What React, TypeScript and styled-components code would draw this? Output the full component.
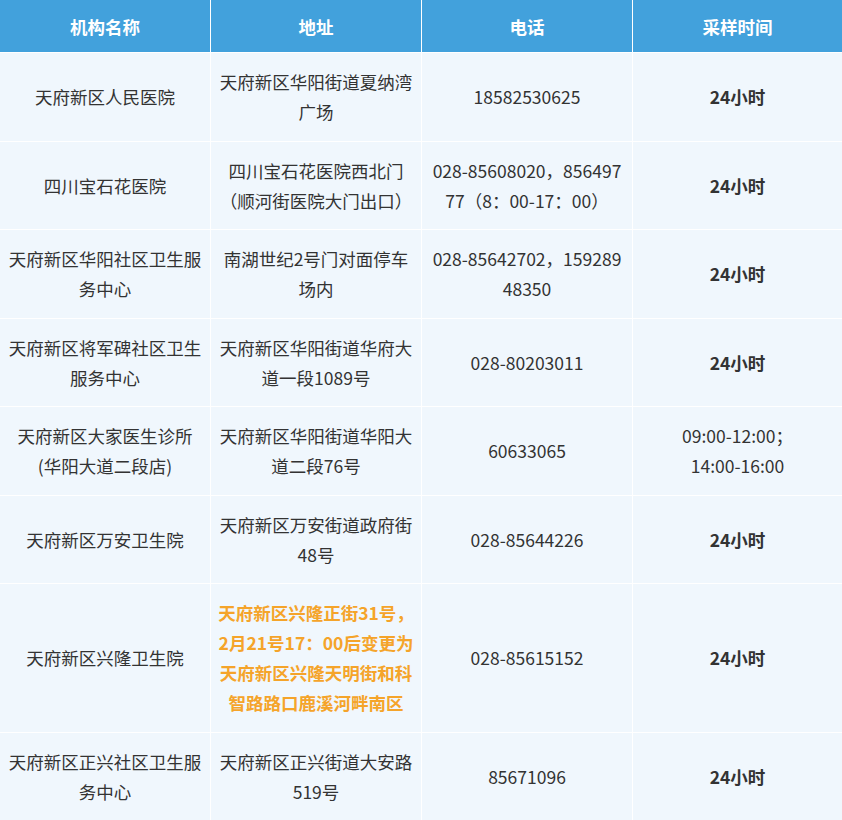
import React from "react";
import styled, { createGlobalStyle } from "styled-components";

const GlobalStyle = createGlobalStyle`
  body {
    margin: 0;
    background: #ffffff;
    font-family: "Noto Sans CJK SC", "Noto Sans", sans-serif;
  }
`;

type SiteType = {
  name: string;
  address: string | string[];
  phone: string;
  time: string | string[];
  highlight?: boolean;
  boldTime?: boolean;
};

const sites: SiteType[] = [
  { name: "天府新区人民医院", address: "天府新区华阳街道夏纳湾广场", phone: "18582530625", time: "24小时", boldTime: true },
  { name: "四川宝石花医院", address: "四川宝石花医院西北门（顺河街医院大门出口）", phone: "028-85608020，85649777（8：00-17：00）", time: "24小时", boldTime: true },
  { name: "天府新区华阳社区卫生服务中心", address: "南湖世纪2号门对面停车场内", phone: "028-85642702，15928948350", time: "24小时", boldTime: true },
  { name: "天府新区将军碑社区卫生服务中心", address: "天府新区华阳街道华府大道一段1089号", phone: "028-80203011", time: "24小时", boldTime: true },
  { name: "天府新区大家医生诊所(华阳大道二段店)", address: "天府新区华阳街道华阳大道二段76号", phone: "60633065", time: ["09:00-12:00；", "14:00-16:00"] },
  { name: "天府新区万安卫生院", address: "天府新区万安街道政府街48号", phone: "028-85644226", time: "24小时", boldTime: true },
  {
    name: "天府新区兴隆卫生院",
    address: ["天府新区兴隆正街31号，", "2月21号17：00后变更为", "天府新区兴隆天明街和科", "智路路口鹿溪河畔南区"],
    phone: "028-85615152",
    time: "24小时",
    highlight: true,
    boldTime: true,
  },
  { name: "天府新区正兴社区卫生服务中心", address: "天府新区正兴街道大安路519号", phone: "85671096", time: "24小时", boldTime: true },
];

const headers = ["机构名称", "地址", "电话", "采样时间"];

const renderLines = (value: string | string[]) =>
  Array.isArray(value) ? value.map((line) => <Line key={line}>{line}</Line>) : value;

const App: React.FC = () => {
  return (
    <>
      <GlobalStyle />
      <Table>
        <HeadRow>
          {headers.map((h, i) => (
            <HeadCell key={h} $last={i === headers.length - 1}>{h}</HeadCell>
          ))}
        </HeadRow>
        {sites.map((site) => (
          <Row key={site.name}>
            <Cell>{site.name}</Cell>
            <Cell $highlight={site.highlight}>{renderLines(site.address)}</Cell>
            <Cell>{site.phone}</Cell>
            <Cell $last $bold={site.boldTime}>{renderLines(site.time)}</Cell>
          </Row>
        ))}
      </Table>
    </>
  );
};

export default App;

const Table = styled.div`
  width: 842px;
  display: flex;
  flex-direction: column;
  background: #f0f7fd;
`;

const HeadRow = styled.div`
  display: grid;
  grid-template-columns: 211px 211px 211px 209px;
  background: #42a1dc;
  border-bottom: 1px solid #ffffff;
`;

const HeadCell = styled.div<{ $last?: boolean }>`
  height: 52px;
  display: flex;
  align-items: center;
  justify-content: center;
  color: #ffffff;
  font-size: 17.5px;
  font-weight: 700;
  border-right: ${(p) => (p.$last ? "none" : "1px solid #ffffff")};
`;

const Row = styled.div`
  display: grid;
  grid-template-columns: 211px 211px 211px 209px;
  border-bottom: 1px solid #ffffff;
`;

const Cell = styled.div<{ $last?: boolean; $bold?: boolean; $highlight?: boolean }>`
  display: flex;
  flex-direction: column;
  align-items: center;
  justify-content: center;
  text-align: center;
  padding: 14px 7px 13.5px;
  font-size: 17.5px;
  line-height: 30px;
  word-break: break-all;
  color: ${(p) => (p.$highlight ? "#f5a42a" : "#333333")};
  font-weight: ${(p) => (p.$bold || p.$highlight ? 700 : 400)};
  border-right: ${(p) => (p.$last ? "none" : "1px solid #ffffff")};
`;

const Line = styled.span`
  display: block;
  white-space: nowrap;
`;
